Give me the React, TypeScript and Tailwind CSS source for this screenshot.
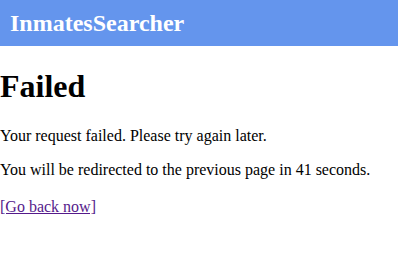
export default function App() {
  return (
    <div className="min-h-screen bg-white text-black font-['Liberation_Serif','Times_New_Roman',serif]">
      <header className="h-[46px] bg-[#6495ed] px-[10px] flex items-center">
        <span className="text-white font-bold text-[24px]">InmatesSearcher</span>
      </header>
      <main>
        <h1 className="text-[32px] font-bold leading-[37px] mt-[22px] mb-[22px]">Failed</h1>
        <p className="text-[16px] leading-[18px] mb-[16px]">Your request failed. Please try again later.</p>
        <p className="text-[16px] leading-[18px] mb-[16px]">
          You will be redirected to the previous page in 41 seconds.
        </p>
        <a href="#" className="text-[16px] leading-[18px] text-[#551a8b] underline">
          [Go back now]
        </a>
      </main>
    </div>
  );
}
